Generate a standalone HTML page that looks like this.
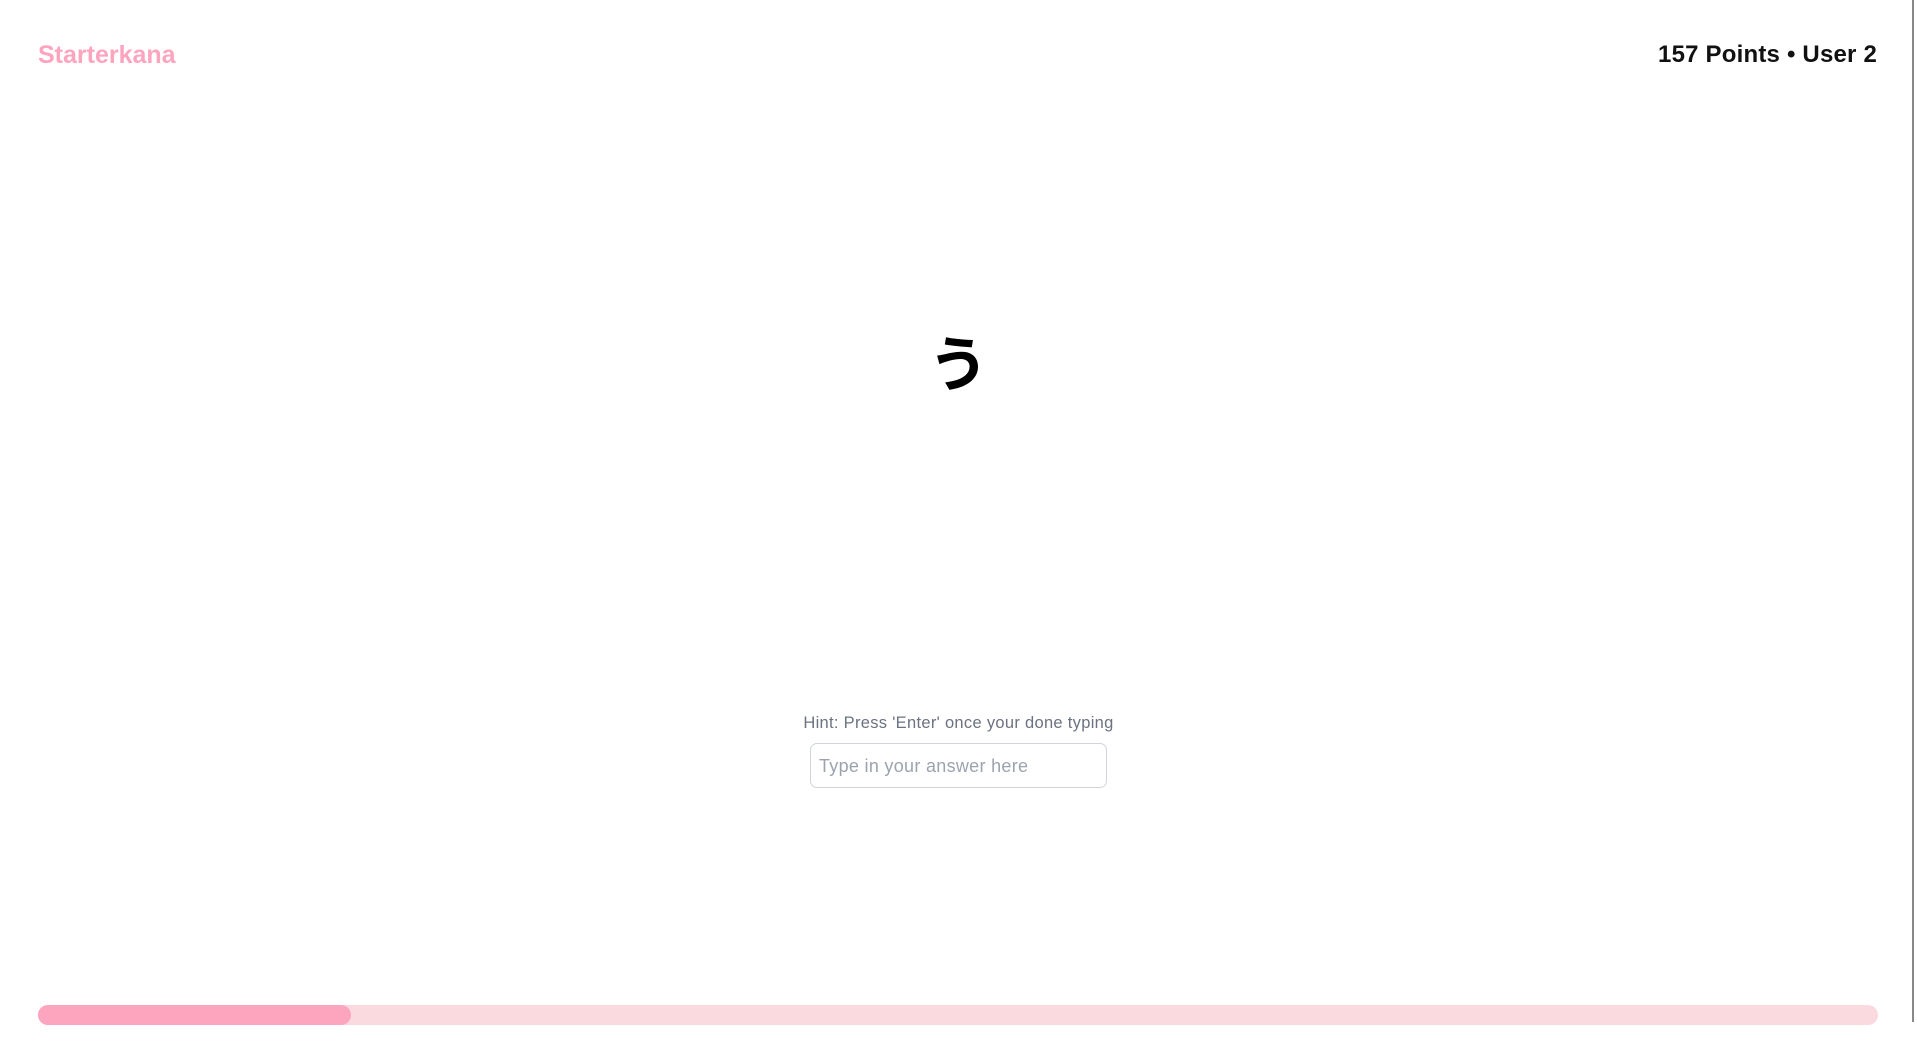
<!DOCTYPE html>
<html><head><meta charset="utf-8"><style>
html,body{margin:0;padding:0;background:#fff;width:1917px;height:1056px;overflow:hidden;font-family:"Liberation Sans","Noto Sans CJK JP",sans-serif;}
.logo{position:absolute;left:38px;top:40px;font-size:25px;font-weight:bold;color:#fda4bf;line-height:30px;}
.pts{position:absolute;right:40px;top:40px;font-size:24px;font-weight:bold;color:#111;line-height:30px;letter-spacing:0.2px;}
.sb{position:absolute;left:1912px;top:0;width:2px;height:1022px;background:#888;}
.kana{position:absolute;left:0;width:1917px;top:316px;text-align:center;font-size:60px;line-height:90px;color:#000;font-weight:bold;font-family:"Noto Sans CJK JP",sans-serif;}
.hint{position:absolute;left:0;width:1917px;top:713px;text-align:center;font-size:16.5px;color:#6b7280;line-height:20px;letter-spacing:0.3px;}
.inp{position:absolute;left:810px;top:743px;width:295px;height:43px;border:1px solid #d1d5db;border-radius:7px;box-sizing:content-box;}
.inp span{position:absolute;left:8px;top:11px;font-size:18px;color:#9ca3af;line-height:22px;letter-spacing:0.3px;}
.track{position:absolute;left:38px;top:1005px;width:1840px;height:20px;border-radius:10px;background:#fadadf;}
.fill{position:absolute;left:38px;top:1005px;width:313px;height:20px;border-radius:10px;background:#fda4bf;}
</style></head><body>
<div class="logo">Starterkana</div>
<div class="pts">157 Points • User 2</div>
<div class="sb"></div>
<div class="kana">う</div>
<div class="hint">Hint: Press 'Enter' once your done typing</div>
<div class="inp"><span>Type in your answer here</span></div>
<div class="track"></div>
<div class="fill"></div>
</body></html>
